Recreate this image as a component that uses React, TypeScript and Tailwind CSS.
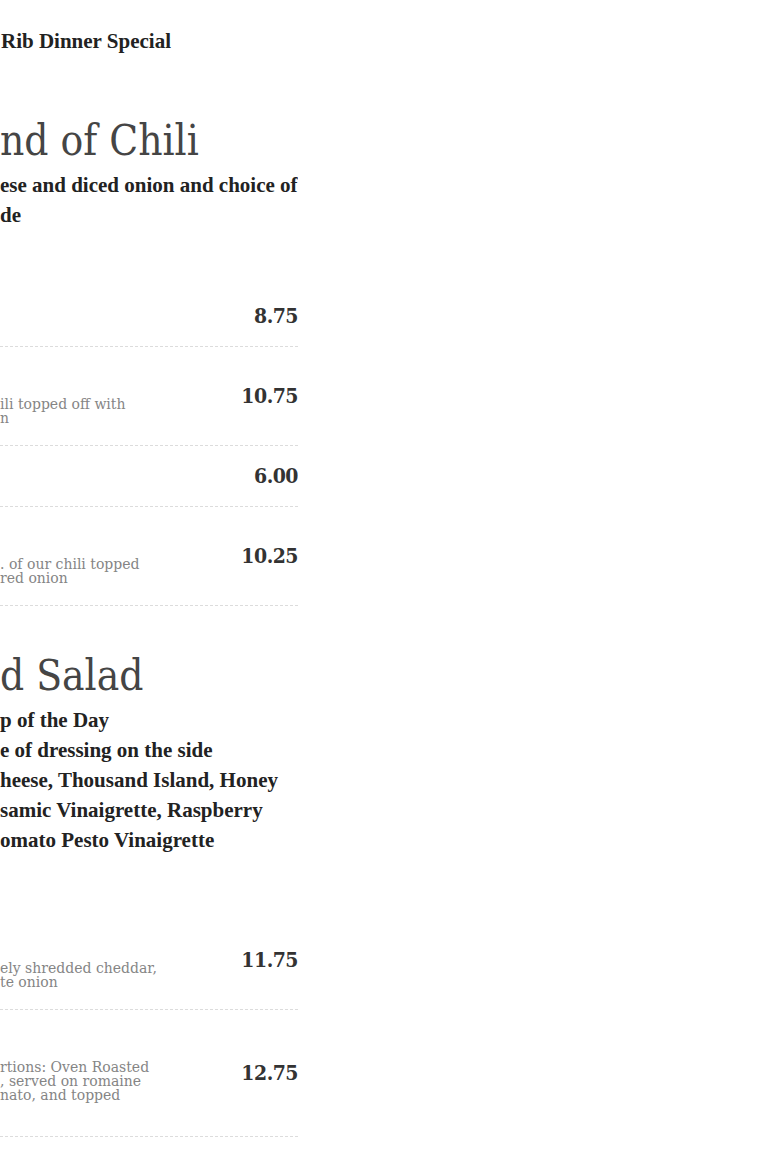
import React from "react"

type Item = {
  price: string
  desc?: string[]
}

type Section = {
  title: string
  lines: string[]
  items: Item[]
}

// the menu column runs off the left edge of the window, only the right side shows
const sections: Section[] = [
  {
    title: "nd of Chili",
    lines: ["ese and diced onion and choice of", "de"],
    items: [
      { price: "8.75" },
      { price: "10.75", desc: ["ili topped off with", "n"] },
      { price: "6.00" },
      { price: "10.25", desc: [". of our chili topped", "red onion"] },
    ],
  },
  {
    title: "d Salad",
    lines: [
      "p of the Day",
      "e of dressing on the side",
      "heese, Thousand Island, Honey",
      "samic Vinaigrette, Raspberry",
      "omato Pesto Vinaigrette",
    ],
    items: [
      { price: "11.75", desc: ["ely shredded cheddar,", "te onion"] },
      { price: "12.75", desc: ["rtions: Oven Roasted", ", served on romaine", "nato, and topped", ""] },
    ],
  },
]

const heading = "font-['DejaVu_Serif_Condensed','DejaVu_Serif',serif] [font-stretch:condensed]"
const display = "font-['Liberation_Serif','Times_New_Roman',serif]"
const body = "font-['DejaVu_Serif',serif]"

const MenuRow = ({ item }: { item: Item }) => (
  <div className="flex items-center justify-between border-b border-dashed border-[#dcdcdc]">
    <div className="pt-[19px] pb-[18px]">
      <div className="h-[23px]" />
      {item.desc && (
        <div className={`mt-[8px] mb-[2px] ${body} text-[14px] leading-[14px] text-[#858585]`}>
          {item.desc.map((line, i) => (
            <div key={i} className="h-[14px] whitespace-nowrap">
              {line}
            </div>
          ))}
        </div>
      )}
    </div>
    <div className={`${heading} text-[21px] font-bold leading-[24px] tracking-[-0.5px] text-[#333333]`}>
      {item.price}
    </div>
  </div>
)

export default function App() {
  return (
    <div className="min-h-screen w-full bg-white">
      <div className="w-[298px] overflow-hidden pt-[26px]">
        <div className={`${display} text-[21px] font-bold leading-[30px] text-[#222222] whitespace-nowrap pl-px`}>
          Rib Dinner Special
        </div>

        {sections.map((s, idx) => (
          <section key={s.title} className={idx === 0 ? "mt-[60px]" : "mt-[45px]"}>
            <h2 className={`${heading} text-[42px] font-normal leading-[50px] text-[#454545] whitespace-nowrap`}>
              {s.title}
            </h2>
            <div className={`mt-[4px] ${display} text-[21px] font-bold leading-[30px] text-[#222222]`}>
              {s.lines.map((l) => (
                <div key={l} className="whitespace-nowrap">
                  {l}
                </div>
              ))}
            </div>
            <div className="mt-[56px]">
              {s.items.map((item) => (
                <MenuRow key={item.price} item={item} />
              ))}
            </div>
          </section>
        ))}
      </div>
    </div>
  )
}
